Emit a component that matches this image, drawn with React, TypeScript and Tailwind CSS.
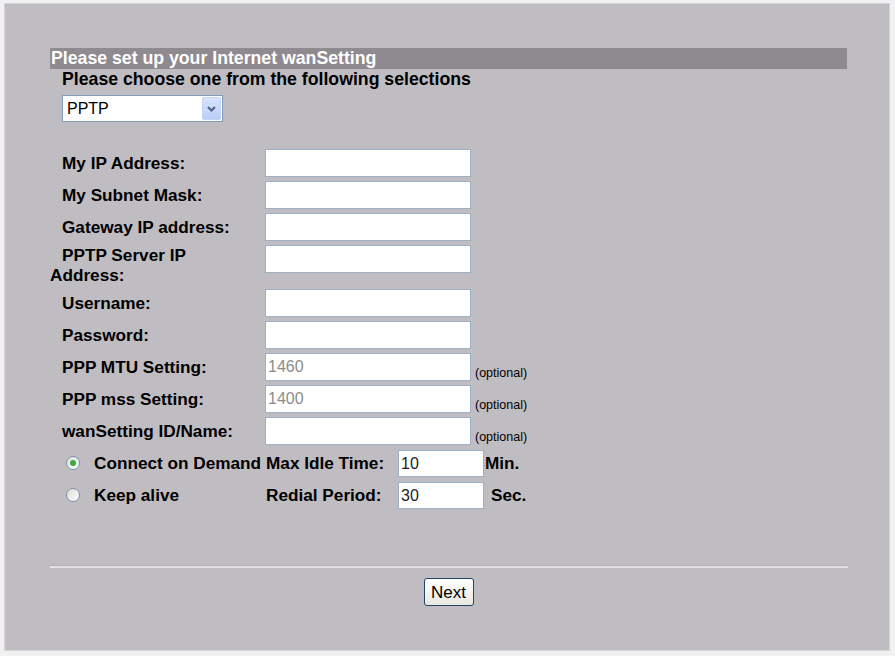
import clsx from "clsx";
import type { ReactNode } from "react";

const fields: { label: ReactNode; key: string; value?: string; optional?: boolean; wrap?: boolean }[] = [
  { key: "ip", label: "My IP Address:" },
  { key: "mask", label: "My Subnet Mask:" },
  { key: "gw", label: "Gateway IP address:" },
  {
    key: "server",
    label: (
      <>
        PPTP Server IP
        <br />
        Address:
      </>
    ),
    wrap: true,
  },
  { key: "user", label: "Username:" },
  { key: "pass", label: "Password:" },
  { key: "mtu", label: "PPP MTU Setting:", value: "1460", optional: true },
  { key: "mss", label: "PPP mss Setting:", value: "1400", optional: true },
  { key: "name", label: "wanSetting ID/Name:", optional: true },
];

function TextBox({ value, className }: { value?: string; className?: string }) {
  return (
    <input
      type="text"
      defaultValue={value}
      className={clsx(
        "block border border-[#9db1c6] bg-white px-[2px] text-[16px] outline-none",
        className
      )}
    />
  );
}

function Radio({ checked }: { checked?: boolean }) {
  return (
    <span className="flex h-[14px] w-[14px] items-center justify-center rounded-full border border-[#7d90a8] bg-linear-to-br from-[#dcdcd6] to-white">
      {checked && <span className="h-[6px] w-[6px] rounded-full bg-[#3fa83a]" />}
    </span>
  );
}

export default function App() {
  return (
    <div
      className="min-h-[656px] bg-[#f1f1f1] pt-[3px] pl-[4px]"
      style={{ fontFamily: '"Liberation Sans", Arial, sans-serif' }}
    >
      <div className="h-[648px] w-[886px] border border-[#d6d4d8] bg-[#c0bdc2] pl-[45px] pt-[44px]">
        <div className="w-[797px]">
          <div className="h-[21px] bg-[#8f8a90] pl-[1px] text-[17.7px] font-bold leading-[21px] text-white">
            Please set up your Internet wanSetting
          </div>

          <div className="pl-[12px]">
            <div className="text-[17.7px] font-bold leading-[20px] text-black">
              Please choose one from the following selections
            </div>
            <div className="relative mt-[6px] h-[27px] w-[161px] border border-[#7f9db9] bg-white">
              <select className="h-full w-full appearance-none bg-transparent pl-[4px] text-[16px] text-black outline-none">
                <option>PPTP</option>
              </select>
              <span className="pointer-events-none absolute right-[1px] top-[1px] flex h-[23px] w-[19px] items-center justify-center rounded-[2px] border border-[#c4d3f3] bg-linear-to-b from-[#d9e4fb] to-[#b9cdf8]">
                <svg width="9" height="6" viewBox="0 0 9 6">
                  <path d="M1 1 L4.5 4.5 L8 1" fill="none" stroke="#4d6185" strokeWidth="2" />
                </svg>
              </span>
            </div>
          </div>

          {/* address / account fields */}
          <div className="mt-[27px] grid grid-cols-[215px_206px_auto] gap-y-[4px] text-[17.2px] font-bold text-black">
            {fields.map((f) => (
              <div key={f.key} className="contents">
                <div
                  className={clsx(
                    "indent-[12px] leading-[20px]",
                    f.wrap ? "self-start" : "self-center"
                  )}
                >
                  {f.label}
                </div>
                <TextBox
                  value={f.value}
                  className="h-[28px] w-[206px] self-start font-normal text-[#8c8c8c]"
                />
                <div className="self-end pl-[4px] text-[12.5px] font-normal leading-[15px]">
                  {f.optional ? "(optional)" : ""}
                </div>
              </div>
            ))}
          </div>

          {/* connection mode */}
          <div className="mt-[5px] grid grid-cols-[216px_132px_86px_auto] items-center gap-y-[5px] text-[17.2px] font-bold text-black">
            <label className="flex items-center gap-[14px] whitespace-nowrap pl-[16px]">
              <Radio checked />
              Connect on Demand
            </label>
            <div className="whitespace-nowrap">Max Idle Time:</div>
            <TextBox value="10" className="h-[27px] w-[86px] font-normal text-[#222]" />
            <div className="pl-[1px]">Min.</div>

            <label className="flex items-center gap-[14px] whitespace-nowrap pl-[16px]">
              <Radio />
              Keep alive
            </label>
            <div className="whitespace-nowrap">Redial Period:</div>
            <TextBox value="30" className="h-[27px] w-[86px] font-normal text-[#222]" />
            <div className="pl-[7px]">Sec.</div>
          </div>

          <div className="mt-[56px] h-[3px] w-[798px] border-t border-[#b3b0b5] bg-[#e3e1e4]" />

          <div className="mt-[10px] flex justify-center">
            <button className="h-[28px] w-[50px] rounded-[3px] border border-[#23456b] bg-linear-to-b from-white to-[#e9e8e2] text-[17px] leading-none text-black">
              Next
            </button>
          </div>
        </div>
      </div>
    </div>
  );
}
